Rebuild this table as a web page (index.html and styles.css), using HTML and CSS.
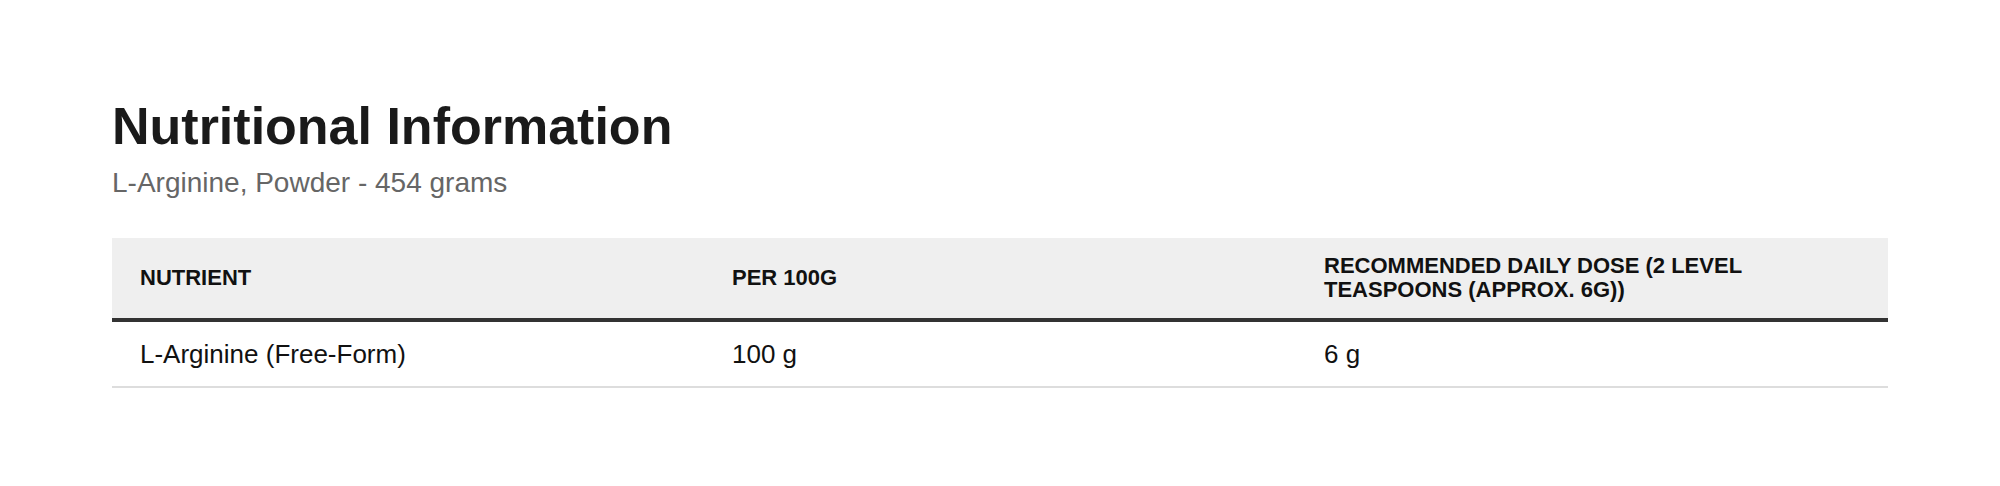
FILE: index.html
```html
<!DOCTYPE html>
<html lang="en">
<head>
<meta charset="utf-8">
<title>Nutritional Information</title>
<link rel="stylesheet" href="styles.css">
</head>
<body>
<main class="page">
  <section class="nutrition">
    <h1 class="title">Nutritional Information</h1>
    <p class="subtitle">L-Arginine, Powder - 454 grams</p>
    <table class="facts">
      <thead>
        <tr>
          <th>Nutrient</th>
          <th>Per 100g</th>
          <th>Recommended Daily Dose (2 level teaspoons (approx. 6g))</th>
        </tr>
      </thead>
      <tbody>
        <tr>
          <td>L-Arginine (Free-Form)</td>
          <td>100 g</td>
          <td>6 g</td>
        </tr>
      </tbody>
    </table>
  </section>
</main>
</body>
</html>
```

FILE: styles.css
```css
html, body {
  margin: 0;
  padding: 0;
  background: #ffffff;
}

body {
  font-family: "Liberation Sans", Arial, sans-serif;
  color: #111111;
}

.page {
  padding: 95px 112px 0;
}

.title {
  margin: 0;
  font-size: 52px;
  line-height: 62px;
  font-weight: 700;
  color: #1a1a1a;
}

.subtitle {
  margin: 6px 0 0;
  font-size: 28px;
  line-height: 39px;
  color: #666666;
}

.facts {
  margin-top: 36px;
  width: 100%;
  border-collapse: collapse;
  table-layout: fixed;
}

.facts th {
  background: #efefef;
  text-align: left;
  vertical-align: middle;
  padding: 16px 28px;
  font-size: 22px;
  line-height: 24px;
  font-weight: 700;
  text-transform: uppercase;
  color: #111111;
  border-bottom: 4px solid #333333;
}

.facts td {
  padding: 16px 28px;
  font-size: 26px;
  line-height: 32px;
  color: #111111;
  border-bottom: 2px solid #dddddd;
}
```
